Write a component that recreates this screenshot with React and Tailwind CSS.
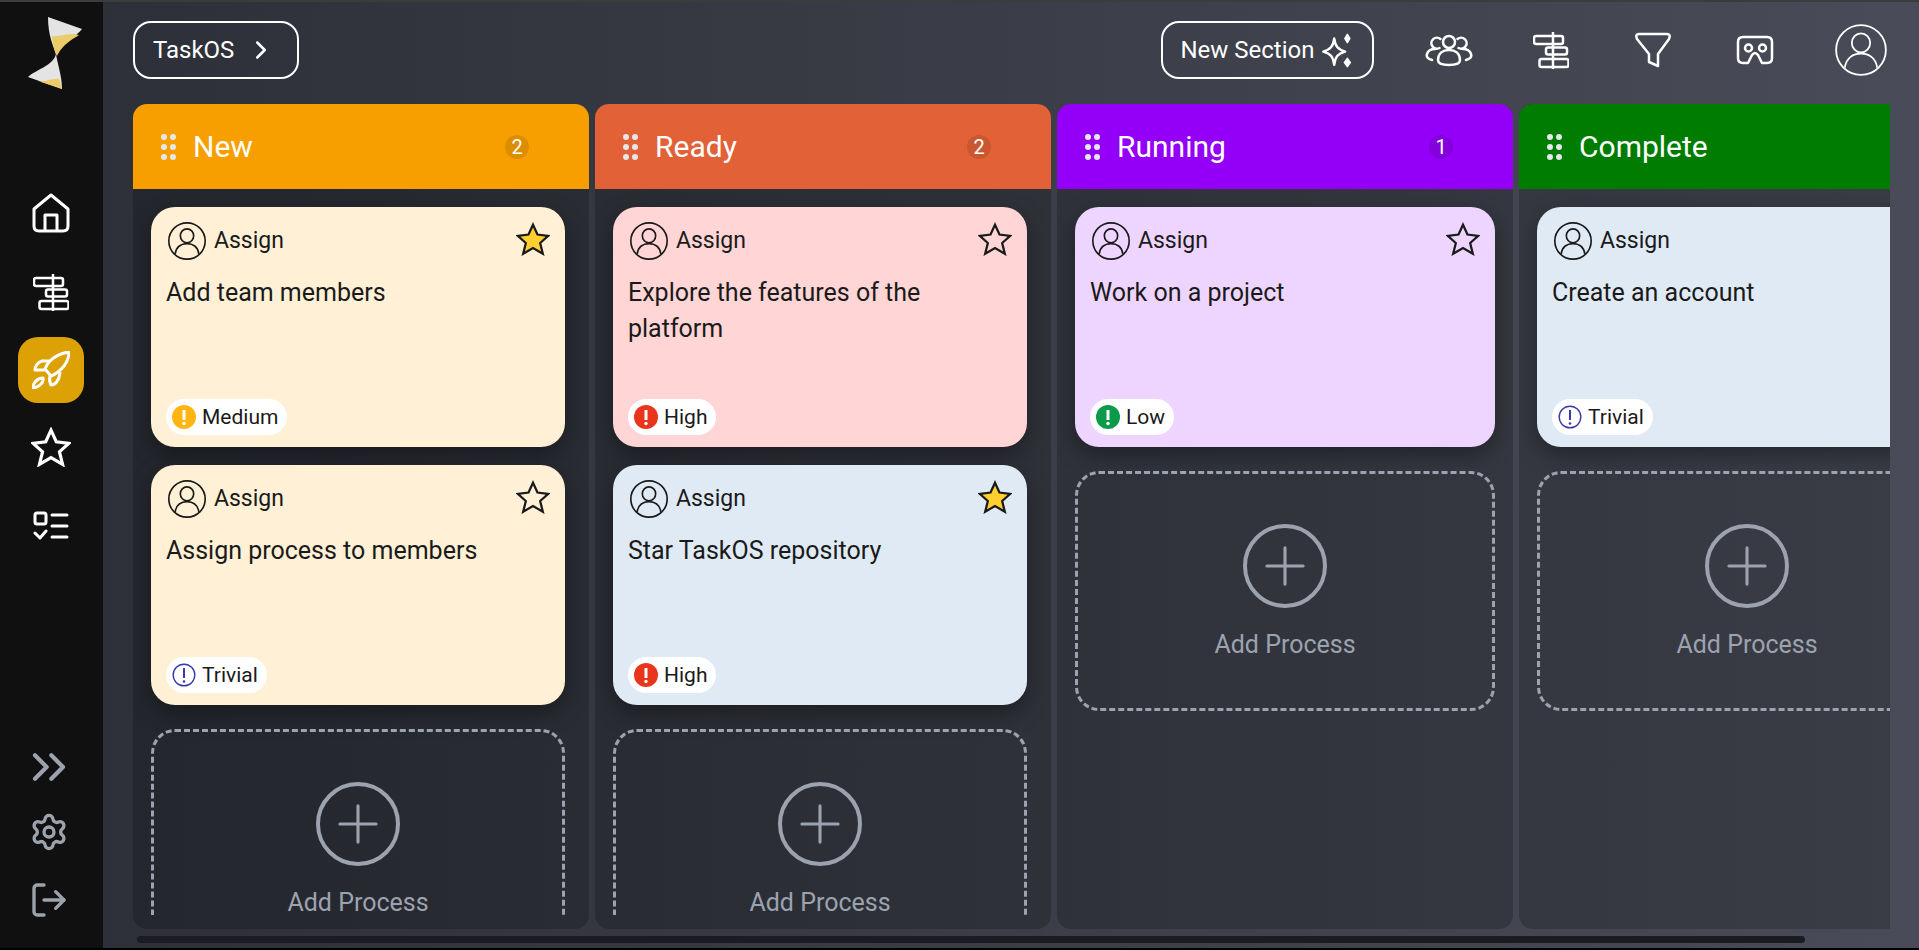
import React from 'react';
import { ChevronRight, ChevronsRight, Settings, LogOut, Plus } from 'lucide-react';

const priorityColors = {
  Medium: '#ffb612',
  High: '#e8351c',
  Low: '#0a9a4a',
};

const columns = [
  {
    name: 'New',
    count: 2,
    color: 'bg-[#f79f00]',
    overflowing: true,
    cards: [
      { title: 'Add team members', priority: 'Medium', starred: true, bg: 'bg-[#fff0d6]' },
      { title: 'Assign process to members', priority: 'Trivial', starred: false, bg: 'bg-[#fff0d6]' },
    ],
  },
  {
    name: 'Ready',
    count: 2,
    color: 'bg-[#e26136]',
    overflowing: true,
    cards: [
      { title: 'Explore the features of the platform', priority: 'High', starred: false, bg: 'bg-[#ffd5d5]' },
      { title: 'Star TaskOS repository', priority: 'High', starred: true, bg: 'bg-[#e0eaf5]' },
    ],
  },
  {
    name: 'Running',
    count: 1,
    color: 'bg-[#9400f7]',
    cards: [{ title: 'Work on a project', priority: 'Low', starred: false, bg: 'bg-[#eed5ff]' }],
  },
  {
    name: 'Complete',
    color: 'bg-[#007d00]',
    cards: [{ title: 'Create an account', priority: 'Trivial', starred: false, bg: 'bg-[#e0eaf5]' }],
  },
];

const Logo = () => (
  <svg width="70" height="90" viewBox="0 0 70 90">
    <path d="M27 7 L61 19 C56 26 45 30 38 40 L36 46 C32 36 27 25 27 7 Z" fill="#e4e4e4" />
    <path d="M31 26 C40 27 50 22 58 25 C50 30 42 35 37 44 L35 45 C33 38 31 32 31 26 Z" fill="#eccc68" />
    <path d="M35 44 C37 56 41 66 41 79 L7 67 C14 60 32 56 35 44 Z" fill="#e4e4e4" />
    <path d="M17 71 C24 73 30 68 38 69 L41 79 Z" fill="#eccc68" />
  </svg>
);

const Home = () => (
  <svg width="38" height="40" viewBox="0 0 38 40" fill="none" stroke="white" strokeWidth="3" strokeLinejoin="round">
    <path d="M19 2 L36 16 V33 Q36 38 31 38 H7 Q2 38 2 33 V16 Z" />
    <path d="M13 38 V22 H25 V38" />
  </svg>
);

const AlignIcon = () => (
  <svg width="36" height="37" viewBox="0 0 36 37" fill="none" stroke="white" strokeWidth="2.5">
    <rect x="1" y="4" width="29" height="8" rx="2" />
    <rect x="13" y="15.5" width="21" height="7" rx="2" />
    <rect x="6.5" y="27" width="29" height="8" rx="2" />
    <path d="M20 0 V37" />
  </svg>
);

const Rocket = () => (
  <svg width="38" height="38" viewBox="0 0 38 38" fill="none" stroke="white" strokeWidth="3" strokeLinejoin="round" strokeLinecap="round">
    <path d="M37 1 C30 2 23 5 18 10 C16 12 14 15 13 18 L19 25 C24 23 28 20 32 15 C35 11 37 6 37 1 Z" />
    <path d="M17 10 H10 C6 11 3 15 3 19 H12" />
    <path d="M18 25 C17 29 18 32 19 34 C23 34 27 30 28 22" />
    <path d="M1 37 C1 32 5 27 11 27 C12 32 7 36 1 37 Z" />
  </svg>
);

const StarIcon = ({ size = 40, fill = 'none', stroke = 'white', strokeWidth = 3, className = '' }) => (
  <svg className={className} width={size} height={size} viewBox="0 0 38 38" fill={fill} stroke={stroke} strokeWidth={strokeWidth} strokeLinejoin="miter">
    <path d="M19 3 L24 14 L36 15.5 L27 23.5 L30 35.5 L19 29 L8 35.5 L11 23.5 L2 15.5 L14 14 Z" />
  </svg>
);

const Checklist = () => (
  <svg width="36" height="30" viewBox="0 0 36 30" fill="none" stroke="white" strokeWidth="3" strokeLinecap="round" strokeLinejoin="round">
    <rect x="2" y="2" width="11" height="11" rx="2" />
    <path d="M19 4 H34 M19 15 H34 M19 26 H34" />
    <path d="M2 22 L7 27 L13 20" />
  </svg>
);

const Person = ({ size = 38, color = '#1a1a1a', strokeWidth = 1.6 }) => (
  <svg width={size} height={size} viewBox="0 0 37 37" fill="none" stroke={color} strokeWidth={strokeWidth}>
    <circle cx="18.5" cy="18.5" r="17.7" />
    <ellipse cx="18.5" cy="13.5" rx="6.5" ry="6.8" />
    <path d="M7 31 C8 24 13 21 18.5 21 C24 21 29 24 30 31" />
  </svg>
);

const Team = () => (
  <svg width="48" height="34" viewBox="0 0 48 34" fill="none" stroke="white" strokeWidth="2.5" strokeLinecap="round">
    <circle cx="24" cy="9" r="6" />
    <path d="M13 27 C13 20 18 17 24 17 C30 17 35 20 35 27 C35 31 31 32 24 32 C17 32 13 31 13 27 Z" />
    <path d="M14.5 15 A5.5 5.5 0 1 1 15.5 6" />
    <path d="M33.5 15 A5.5 5.5 0 1 0 32.5 6" />
    <path d="M7 27 C3 26 1 24 2 21 C3 18 6 16 10 16" />
    <path d="M41 27 C45 26 47 24 46 21 C45 18 42 16 38 16" />
  </svg>
);

const Funnel = () => (
  <svg width="36" height="36" viewBox="0 0 36 36" fill="none" stroke="white" strokeWidth="2.5" strokeLinejoin="round">
    <path d="M4 2 H32 Q36 2 34 7 L23 22 V34 L14 30 V22 L2 7 Q0 2 4 2 Z" />
  </svg>
);

const Vr = () => (
  <svg width="38" height="30" viewBox="0 0 38 30" fill="none" stroke="white" strokeWidth="2.5" strokeLinejoin="round">
    <path d="M7 2 H31 Q36 2 36 7 V23 Q36 28 31 28 H26 L22 20 Q19 16 16 20 L12 28 H7 Q2 28 2 23 V7 Q2 2 7 2 Z" />
    <circle cx="12.5" cy="13" r="3.5" />
    <circle cx="26.5" cy="13" r="3.5" />
  </svg>
);

const Sparkles = () => (
  <svg width="35" height="35" viewBox="0 0 32 32" fill="none" stroke="white" strokeWidth="2.2" strokeLinejoin="round">
    <path d="M13 5 C14 12 16 15 23 17 C16 19 14 22 13 29 C12 22 10 19 3 17 C10 15 12 12 13 5 Z" />
    <path d="M25 1 L27.5 5 L25 9 L22.5 5 Z" fill="white" strokeWidth="1" />
    <path d="M25 23 L28 27 L25 31 L22 27 Z" fill="white" strokeWidth="1" />
  </svg>
);

const GripDots = () => (
  <div className="grid grid-cols-2 gap-x-[3px] gap-y-[4px] w-[15px]">
    {[0, 1, 2, 3, 4, 5].map((i) => (
      <span key={i} className="w-[6px] h-[6px] rounded-full bg-[#e5e7eb]"></span>
    ))}
  </div>
);

const PriorityIcon = ({ priority }) => {
  if (priority === 'Trivial') {
    return (
      <svg width="24" height="24" viewBox="0 0 24 24" fill="none">
        <circle cx="12" cy="12" r="10.8" stroke="#3a3aa8" strokeWidth="1.4" />
        <path d="M12 5 V15" stroke="#3a3aa8" strokeWidth="2" />
        <circle cx="12" cy="18.5" r="1.3" fill="#3a3aa8" />
      </svg>
    );
  }
  return (
    <svg width="24" height="24" viewBox="0 0 24 24" fill="none">
      <circle cx="12" cy="12" r="12" fill={priorityColors[priority]} />
      <path d="M12 5 V15" stroke="white" strokeWidth="3" />
      <circle cx="12" cy="18.5" r="1.7" fill="white" />
    </svg>
  );
};

const Card = ({ title, priority, starred, bg }) => (
  <div className={`${bg} h-[240px] shrink-0 rounded-[24px] flex flex-col pt-[15px] pl-[15px] pr-[15px] pb-[12px] shadow-[0_8px_22px_rgba(0,0,0,0.35)] text-[#1a1a1a]`}>
    <div className="flex items-center justify-between pl-[2px]">
      <div className="flex items-center gap-[8px]">
        <Person />
        <span className="text-[23px] leading-[38px]">Assign</span>
      </div>
      <StarIcon className="-mt-[4px]" size={34} fill={starred ? '#ffd02f' : 'none'} stroke="#1a1a1a" strokeWidth={2.5} />
    </div>
    <p className="text-[25px] leading-[36px] mt-[15px] flex-1">{title}</p>
    <div className="self-start h-[36px] bg-white rounded-full flex items-center gap-[6px] pl-[6px] pr-[9px]">
      <PriorityIcon priority={priority} />
      <span className="text-[21px] leading-[24px]">{priority}</span>
    </div>
  </div>
);

const AddProcess = () => (
  <div className="mt-[6px] h-[240px] shrink-0 rounded-[24px] border-[3px] border-dashed border-[#9ca3af] flex flex-col items-center pt-[50px] text-[#9ca3af]">
    <div className="w-[84px] h-[84px] rounded-full border-4 border-[#9ca3af] flex items-center justify-center">
      <Plus size={62} strokeWidth={1.2} />
    </div>
    <span className="text-[25px] leading-[24px] mt-[25px]">Add Process</span>
  </div>
);

const Column = ({ name, count, color, cards, overflowing }) => (
  <div className="w-[456px] shrink-0 h-full flex flex-col rounded-t-[14px] rounded-b-[14px] overflow-hidden bg-black/20">
    <div className={`${color} h-[85px] shrink-0 flex items-center pl-[28px] text-white`}>
      <GripDots />
      <span className="text-[30px] ml-[17px]">{name}</span>
      {count && (
        <span className="ml-auto mr-[60px] w-[24px] h-[24px] rounded-full bg-black/10 flex items-center justify-center text-[20px]">
          {count}
        </span>
      )}
    </div>
    <div className={`flex-1 min-h-0 mb-[14px] overflow-hidden pl-[18px] pt-[18px] flex flex-col gap-[18px] ${overflowing ? 'pr-[24px]' : 'pr-[18px]'}`}>
      {cards.map((card) => (
        <Card key={card.title} {...card} />
      ))}
      <AddProcess />
    </div>
  </div>
);

const App = () => {
  return (
    <div className="flex h-screen w-full overflow-hidden border-t-2 border-b-2 border-t-[#3c3c3c] border-b-black font-['Roboto',sans-serif]">
      {/* Sidebar */}
      <aside className="w-[103px] shrink-0 bg-[#101010] flex flex-col items-center">
        <div className="mt-[8px] ml-[9px]">
          <Logo />
        </div>
        <nav className="mt-[93px] mr-[2px] flex flex-col items-center">
          <Home />
          <div className="mt-[41px]">
            <AlignIcon />
          </div>
          <div className="mt-[26px] w-[66px] h-[66px] rounded-[20px] bg-[#dca105] flex items-center justify-center">
            <Rocket />
          </div>
          <div className="mt-[24px]">
            <StarIcon />
          </div>
          <div className="mt-[44px]">
            <Checklist />
          </div>
        </nav>
        <div className="mt-auto mb-[28px] mr-[6px] flex flex-col items-center gap-[28px] text-[#9ca3af]">
          <ChevronsRight size={56} strokeWidth={1.8} className="-my-[13px]" />
          <Settings size={40} strokeWidth={2} className="mt-[2px]" />
          <LogOut size={40} strokeWidth={2} />
        </div>
      </aside>

      {/* Main */}
      <main className="flex-1 min-w-0 flex flex-col bg-gradient-to-r from-[#2d3038] to-[#494c58]">
        <header className="h-[102px] shrink-0 flex items-center pl-[30px] pr-[32px] pb-[6px] text-white">
          <button className="h-[58px] w-[166px] rounded-[18px] border-2 border-white flex items-center pl-[18px] text-[24px]">
            TaskOS
            <ChevronRight size={30} strokeWidth={2} className="ml-[12px]" />
          </button>
          <button className="ml-auto h-[58px] w-[213px] rounded-[18px] border-2 border-white flex items-center justify-center gap-[5px] text-[24px] whitespace-nowrap">
            New Section
            <Sparkles />
          </button>
          <div className="ml-[51px] flex items-center">
            <Team />
          </div>
          <div className="ml-[60px] flex items-center">
            <AlignIcon />
          </div>
          <div className="ml-[66px] flex items-center">
            <Funnel />
          </div>
          <div className="ml-[65px] flex items-center">
            <Vr />
          </div>
          <div className="ml-[61px] flex items-center">
            <Person size={52} color="white" strokeWidth={1.3} />
          </div>
        </header>

        <div className="flex-1 min-h-0 ml-[30px] mr-[29px] flex gap-[6px] overflow-hidden">
          {columns.map((col) => (
            <Column key={col.name} {...col} />
          ))}
        </div>

        {/* Scrollbar */}
        <div className="h-[19px] shrink-0 pt-[7px] pl-[34px]">
          <div className="w-[1668px] h-[7px] rounded-full bg-[#1b1c22]"></div>
        </div>
      </main>
    </div>
  );
};

export default App;
